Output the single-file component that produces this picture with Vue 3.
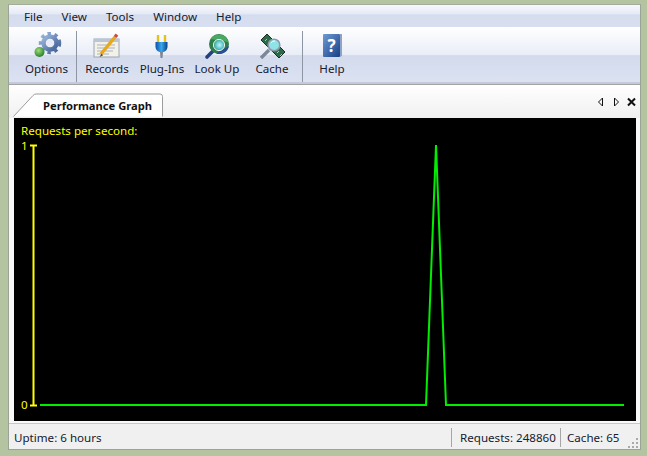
<script setup>
const menus = ['File', 'View', 'Tools', 'Window', 'Help']
</script>

<template>
  <div class="page">
    <div class="window">
      <div class="menubar">
        <span v-for="m in menus" :key="m" class="menu">{{ m }}</span>
      </div>

      <div class="toolbar">
        <div class="btn b-options">
          <svg width="34" height="28" viewBox="0 0 34 28">
            <defs>
              <linearGradient id="gear" x1="0" y1="0" x2="1" y2="1"><stop offset="0" stop-color="#9db7dc"/><stop offset="1" stop-color="#3f5f96"/></linearGradient>
              <radialGradient id="ball" cx=".4" cy=".35" r=".7"><stop offset="0" stop-color="#9fdc7c"/><stop offset="1" stop-color="#1f7a24"/></radialGradient>
            </defs>
            <circle cx="20" cy="11" r="6.5" fill="none" stroke="url(#gear)" stroke-width="4.5"/>
            <circle cx="20" cy="11" r="9.5" fill="none" stroke="url(#gear)" stroke-width="3.5" stroke-dasharray="3.4 3.6"/>
            <circle cx="20" cy="11" r="3.8" fill="#e6ebf5"/>
            <circle cx="9.500" cy="20" r="5" fill="url(#ball)"/>
          </svg>
          <span>Options</span>
        </div>
        <div class="sep"></div>
        <div class="btn b-records">
          <svg width="34" height="28" viewBox="0 0 34 28">
            <rect x="4" y="7" width="25" height="18" fill="#f4f1e6" stroke="#9aa6b8"/>
            <rect x="4" y="7" width="25" height="3" fill="#b9c6d8"/>
            <path d="M7 13h18M7 16h18M7 19h16M7 22h12" stroke="#a9b3c2"/>
            <path d="M11 22 L25 5" stroke="#e8a81c" stroke-width="3.4"/>
            <path d="M25 5 L27 2.600" stroke="#d8443a" stroke-width="3.4"/>
            <path d="M11.500 21.500 L9.500 25 L13 23.400Z" fill="#5b4a32"/>
          </svg>
          <span>Records</span>
        </div>
        <div class="btn b-plug">
          <svg width="24" height="28" viewBox="0 0 24 28">
            <defs>
              <linearGradient id="plug" x1="0" y1="0" x2="1" y2="0"><stop offset="0" stop-color="#0f4fa8"/><stop offset=".5" stop-color="#38a8ea"/><stop offset="1" stop-color="#0c3f8c"/></linearGradient>
            </defs>
            <path d="M8 3v8M15 3v8" stroke="#e4c21c" stroke-width="2.400"/>
            <path d="M5.500 10h12v5a6 6 0 0 1-4 5h-4a6 6 0 0 1-4-5z" fill="url(#plug)"/>
            <path d="M10 20h3l-.5 6h-2z" fill="#7d8794"/>
          </svg>
          <span>Plug-Ins</span>
        </div>
        <div class="btn b-lookup">
          <svg width="30" height="28" viewBox="0 0 30 28">
            <defs>
              <radialGradient id="globe" cx=".55" cy=".5" r=".6"><stop offset="0" stop-color="#c4f4f4"/><stop offset=".55" stop-color="#5cc6ce"/><stop offset="1" stop-color="#2d8a4c"/></radialGradient>
            </defs>
            <path d="M12 18 L5 25" stroke="#25407e" stroke-width="3.600" stroke-linecap="round"/>
            <circle cx="17" cy="12" r="10" fill="#2f7d4a"/>
            <path d="M8.500 7a10 10 0 0 1 18 3z" fill="#4aa862"/>
            <path d="M27 14a10 10 0 0 1-13 7.500z" fill="#2a4e96"/>
            <circle cx="17" cy="13" r="5.600" fill="url(#globe)" stroke="#e4f2f4"/>
          </svg>
          <span>Look Up</span>
        </div>
        <div class="btn b-cache">
          <svg width="28" height="28" viewBox="0 0 28 28">
            <path d="M3 8 L9 2 L27 20 L21 26Z" fill="#2e6a4a" stroke="#1c2c28"/>
            <path d="M7 9l2-2M10 12l2-2M19 21l2-2M22 24l2-2" stroke="#c8c28a"/>
            <path d="M11 18 L3 26" stroke="#7c8898" stroke-width="3.400"/>
            <circle cx="16" cy="13" r="5.800" fill="#8fe2e6" stroke="#8d98a8" stroke-width="1.600"/>
            <path d="M13 11a4 4 0 0 1 4-2" stroke="#fff" fill="none"/>
          </svg>
          <span>Cache</span>
        </div>
        <div class="sep"></div>
        <div class="btn b-help">
          <svg width="24" height="28" viewBox="0 0 24 28">
            <defs>
              <linearGradient id="book" x1="0" y1="0" x2="1" y2="1"><stop offset="0" stop-color="#6f9bd4"/><stop offset="1" stop-color="#173f86"/></linearGradient>
            </defs>
            <path d="M20 2h2v22l-2 1z" fill="#8ea4c4"/>
            <rect x="3" y="2" width="17" height="23" rx="1" fill="url(#book)"/>
            <text x="11.500" y="20" class="q">?</text>
          </svg>
          <span>Help</span>
        </div>
      </div>

      <div class="panel">
        <div class="tabstrip">
          <div class="tab">
            <svg class="tab-shape" width="152" height="24" viewBox="0 0 152 24">
              <path d="M0.500 23.500 L20 2.500 Q21.500 1 23 1 H147 Q149.500 1 149.500 3.500 V23.500" fill="#fff" stroke="#9c9c9c"/>
            </svg>
            <span class="tab-label">Performance Graph</span>
          </div>
          <div class="tools">
            <svg width="44" height="12" viewBox="0 0 44 12">
              <path d="M6.500 2 L2.500 6 L6.500 10Z" fill="none" stroke="#111"/>
              <path d="M18.500 2 L22.500 6 L18.500 10Z" fill="none" stroke="#111"/>
              <path d="M32 2.500 L39 9.500 M39 2.500 L32 9.500" stroke="#111" stroke-width="2"/>
            </svg>
          </div>
        </div>

        <svg class="graph" width="622" height="303" viewBox="0 0 622 303">
          <text x="7" y="17" class="lbl">Requests per second:</text>
          <text x="7" y="32" class="lbl">1</text>
          <text x="7" y="291" class="lbl">0</text>
          <path d="M16 27.500 H23 M19.500 27 V287 M16 287.500 H23" fill="none" stroke="#ffff00" stroke-width="2"/>
          <path d="M26 287 H412 L422 27 L432 287 H610" fill="none" stroke="#00ee00" stroke-width="2"/>
        </svg>
      </div>

      <div class="statusbar">
        <span class="cell grow">Uptime: 6 hours</span>
        <span class="cell req">Requests: 248860</span>
        <span class="cell cache">Cache: 65</span>
        <svg class="grip" width="11" height="11" viewBox="0 0 11 11">
          <path d="M8 1h2v2H8zM4 5h2v2H4zM8 5h2v2H8zM0 9h2v2H0zM4 9h2v2H4zM8 9h2v2H8z" fill="#a9aaa9"/>
        </svg>
      </div>
    </div>
  </div>
</template>

<style>
html, body { margin: 0; background: #b4c3a0; }
</style>

<style scoped>
.page {
  width: 647px;
  height: 456px;
  box-sizing: border-box;
  padding: 4px 6px 6px 8px;
  background: #b4c3a0;
  font-family: "Noto Sans", Tahoma, sans-serif;
  font-size: 11.6px;
  color: #15202e;
  overflow: hidden;
}
.window {
  height: 100%;
  display: flex;
  flex-direction: column;
  border: 1px solid #9aa396;
  border-top-color: #a4ad9c;
  box-sizing: border-box;
}
.menubar {
  height: 22px;
  flex: none;
  display: flex;
  align-items: center;
  padding-left: 15px;
  background: linear-gradient(#f6f8fc 0, #e6eaf5 40%, #d4dcee 45%, #d8dff0 100%);
}
.menu { margin-right: 19px; }
.toolbar {
  height: 55px;
  flex: none;
  display: flex;
  align-items: stretch;
  background: linear-gradient(#ffffff 0, #e9edf7 50%, #d2daec 52%, #dce2f2 100%);
  border-bottom: 2px solid #c4cade;
}
.btn {
  display: flex;
  flex-direction: column;
  align-items: center;
  justify-content: flex-end;
  padding-bottom: 5px;
  box-sizing: border-box;
}
.btn span { line-height: 16px; white-space: nowrap; }
.btn svg { margin-bottom: 1px; }
.b-options { width: 67px; padding-left: 8px; }
.b-records { width: 60px; }
.b-plug { width: 50px; }
.b-lookup { width: 60px; }
.b-cache { width: 50px; margin-right: 5px; }
.b-help { width: 58px; }
.sep {
  width: 1px;
  margin: 4px 0 0;
  height: 51px;
  background: #8e96a4;
}
.panel {
  flex: none;
  border-top: 1px solid #a3a3a3;
  background: #f8f8f8;
  padding-bottom: 2px;
}
.tabstrip {
  height: 33px;
  display: flex;
  justify-content: space-between;
  align-items: flex-end;
  background: linear-gradient(#ffffff, #f0f0f0);
}
.tab {
  position: relative;
  width: 152px;
  height: 24px;
  margin-left: 4px;
  margin-bottom: 1px;
}
.tab-shape { position: absolute; left: 0; top: 0; }
.tab-label {
  position: absolute;
  left: 30px;
  top: 4px;
  font-weight: 700;
  font-size: 11.2px;
  line-height: 17px;
  color: #111;
  white-space: nowrap;
}
.tools { margin: 0 0 10px; line-height: 0; }
.graph {
  display: block;
  margin-left: 5px;
  background: #000;
}
.lbl { fill: #ffff00; font-size: 11.6px; }
.q { fill: #fff; font-size: 17px; font-weight: 700; text-anchor: middle; }
.statusbar {
  flex: 1;
  min-height: 0;
  display: flex;
  align-items: center;
  position: relative;
  background: #f0f0f0;
  border-top: 1px solid #c8c8c8;
  padding-top: 2px;
}
.cell {
  height: 19px;
  line-height: 19px;
  padding-left: 8px;
  border-left: 1px solid #a6a6a6;
  box-sizing: border-box;
  white-space: nowrap;
}
.grow { flex: 1; padding-left: 5px; border-left: none; }
.req { width: 109px; }
.cache { width: 80px; padding-left: 6px; }
.grip { position: absolute; right: 1px; bottom: 1px; }
</style>
